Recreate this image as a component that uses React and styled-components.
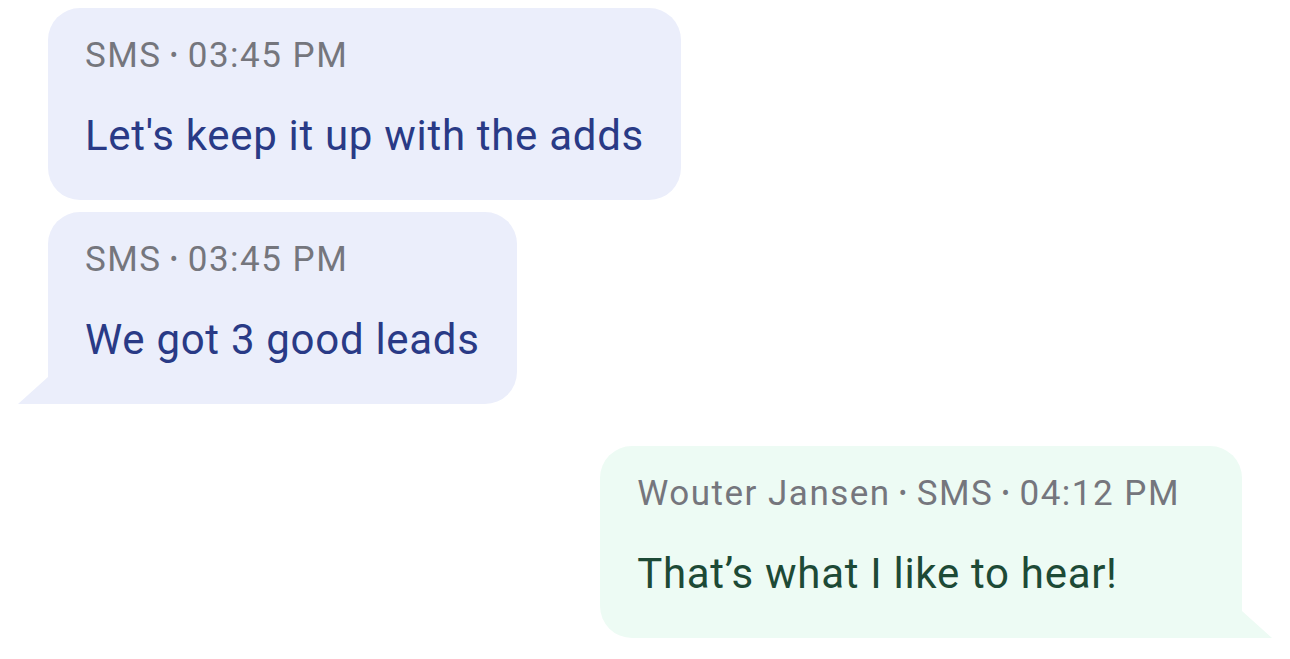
import React from "react";
import styled, { createGlobalStyle } from "styled-components";

const Global = createGlobalStyle`
  html, body { margin: 0; padding: 0; background: #ffffff; }
  body { font-family: Roboto, "Noto Sans", sans-serif; }
`;

const Thread = styled.div`
  display: flex;
  flex-direction: column;
  padding: 8px 48px 0;
`;

const Group = styled.div`
  display: flex;
  flex-direction: column;
  align-items: ${(p) => (p.$out ? "flex-end" : "flex-start")};
  gap: 12px;
  margin-bottom: 42px;
`;

const Bubble = styled.div`
  position: relative;
  box-sizing: border-box;
  height: 192px;
  padding: 27px ${(p) => (p.$out ? "62px" : "37px")} 0 37px;
  border-radius: 32px;
  background: ${(p) => (p.$out ? "#edfbf4" : "#ebeefb")};
  ${(p) =>
    p.$tail &&
    (p.$out
      ? `border-bottom-right-radius: 0;`
      : `border-bottom-left-radius: 0;`)}
  &::before {
    content: "";
    display: ${(p) => (p.$tail ? "block" : "none")};
    position: absolute;
    bottom: 0;
    width: 30px;
    height: 27px;
    background: inherit;
    ${(p) =>
      p.$out
        ? `right: -30px; clip-path: polygon(0 0, 100% 100%, 0 100%);`
        : `left: -30px; clip-path: polygon(100% 0, 100% 100%, 0 100%);`}
  }
`;

const Meta = styled.div`
  font-size: 35px;
  line-height: 41px;
  letter-spacing: 1.5px;
  color: #75767d;
  white-space: nowrap;
`;

const Dot = styled.span`
  margin: 0 10px 0 8px;
  font-size: 24px;
  letter-spacing: 0;
  vertical-align: 4px;
`;

const Text = styled.div`
  margin-top: 35px;
  font-size: 42px;
  line-height: 49px;
  letter-spacing: 0.7px;
  color: ${(p) => (p.$out ? "#1d4a36" : "#293a86")};
  white-space: nowrap;
`;

const messages = [
  { group: 0, meta: ["SMS", "03:45 PM"], text: "Let's keep it up with the adds" },
  { group: 0, meta: ["SMS", "03:45 PM"], text: "We got 3 good leads", tail: true },
  { group: 1, out: true, meta: ["Wouter Jansen", "SMS", "04:12 PM"], text: "That’s what I like to hear!", tail: true },
];

function MetaLine({ parts }) {
  return (
    <Meta>
      {parts.map((p, i) => (
        <React.Fragment key={i}>
          {i > 0 && <Dot>•</Dot>}
          {p}
        </React.Fragment>
      ))}
    </Meta>
  );
}

export default function App() {
  const groups = [0, 1];
  return (
    <>
      <Global />
      <Thread>
        {groups.map((g) => {
          const items = messages.filter((m) => m.group === g);
          const out = items[0].out;
          return (
            <Group key={g} $out={out}>
              {items.map((m, i) => (
                <Bubble key={i} $out={m.out} $tail={m.tail}>
                  <MetaLine parts={m.meta} />
                  <Text $out={m.out}>{m.text}</Text>
                </Bubble>
              ))}
            </Group>
          );
        })}
      </Thread>
    </>
  );
}
